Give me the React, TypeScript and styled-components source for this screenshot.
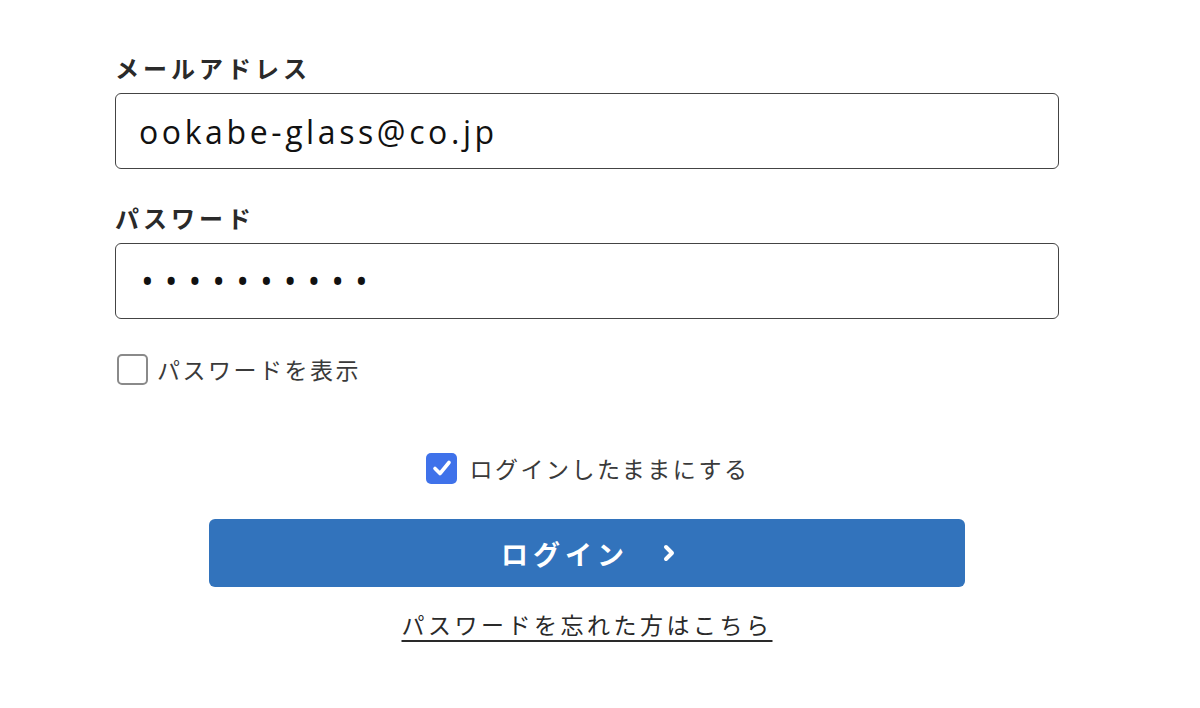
import React from "react";
import styled, { createGlobalStyle } from "styled-components";

const Global = createGlobalStyle`
  html, body { margin: 0; padding: 0; background: #fff; }
  body { font-family: "Noto Sans CJK JP", "Noto Sans", sans-serif; color: #222; }
`;

const Page = styled.div`
  width: 1200px;
  height: 708px;
  box-sizing: border-box;
  padding: 53px 0 0 115px;
`;

const Form = styled.form`
  width: 944px;
  display: flex;
  flex-direction: column;
`;

const Label = styled.label<{ $top?: number }>`
  display: block;
  font-size: 24px;
  line-height: 30px;
  font-weight: 700;
  color: #2a2a2a;
  margin-top: ${(p) => p.$top ?? 0}px;
  margin-bottom: 10px;
  letter-spacing: 4px;
`;

const Input = styled.input<{ $dots?: boolean }>`
  box-sizing: border-box;
  width: 944px;
  height: 76px;
  border: 1.5px solid #444;
  border-radius: 6px;
  padding: 0 0 0 ${(p) => (p.$dots ? 25 : 23)}px;
  font-family: "Open Sans", "Noto Sans", sans-serif;
  font-size: ${(p) => (p.$dots ? 34 : 32)}px;
  letter-spacing: ${(p) => (p.$dots ? "11px" : "3.6px")};
  color: #111;
  background: #fff;
  outline: none;
`;

const CheckRow = styled.label<{ $center?: boolean; $top: number }>`
  display: flex;
  align-items: center;
  gap: ${(p) => (p.$center ? 12 : 9)}px;
  height: 32px;
  margin-top: ${(p) => p.$top}px;
  align-self: ${(p) => (p.$center ? "center" : "flex-start")};
  padding-left: 2px;
  font-size: 23px;
  color: #3a3a3a;
  letter-spacing: 2.5px;
`;

const Box = styled.span<{ $checked?: boolean }>`
  box-sizing: border-box;
  width: 31px;
  height: 31px;
  border-radius: 5px;
  border: ${(p) => (p.$checked ? "none" : "2px solid #8a8a8a")};
  background: ${(p) => (p.$checked ? "#3f72ea" : "#fff")};
  display: flex;
  align-items: center;
  justify-content: center;
`;

const Button = styled.button`
  align-self: center;
  margin-top: 35px;
  width: 756px;
  height: 68px;
  border: none;
  border-radius: 6px;
  background: #3273bc;
  color: #fff;
  font-family: "Noto Sans CJK JP", sans-serif;
  font-size: 27px;
  font-weight: 700;
  letter-spacing: 5px;
  display: flex;
  align-items: center;
  justify-content: center;
  gap: 32px;
  padding: 0 0 0 4px;
`;

const Forgot = styled.a`
  align-self: center;
  margin-top: 21px;
  font-size: 23px;
  line-height: 32px;
  color: #2a2a2a;
  text-decoration: underline;
  text-underline-offset: 6px;
  text-decoration-thickness: 2px;
  letter-spacing: 3.5px;
`;

export default function App() {
  return (
    <Page>
      <Global />
      <Form onSubmit={(e) => e.preventDefault()}>
        <Label>メールアドレス</Label>
        <Input type="text" defaultValue="ookabe-glass@co.jp" readOnly />
        <Label $top={34}>パスワード</Label>
        <Input $dots type="password" defaultValue="abcdefghij" readOnly />
        <CheckRow $top={34}>
          <Box />
          パスワードを表示
        </CheckRow>
        <CheckRow $center $top={67}>
          <Box $checked>
            <svg width="20" height="18" viewBox="0 0 20 18">
              <path d="M3 9.5 L8 14.5 L17 3.5" fill="none" stroke="#fff" strokeWidth="3.6" strokeLinecap="round" strokeLinejoin="round" />
            </svg>
          </Box>
          ログインしたままにする
        </CheckRow>
        <Button type="button">
          <span>ログイン</span>
          <svg width="16" height="20" viewBox="0 0 16 20">
            <path d="M5 4 L11 10 L5 16" fill="none" stroke="#fff" strokeWidth="4" strokeLinecap="round" strokeLinejoin="round" />
          </svg>
        </Button>
        <Forgot href="#">パスワードを忘れた方はこちら</Forgot>
      </Form>
    </Page>
  );
}
